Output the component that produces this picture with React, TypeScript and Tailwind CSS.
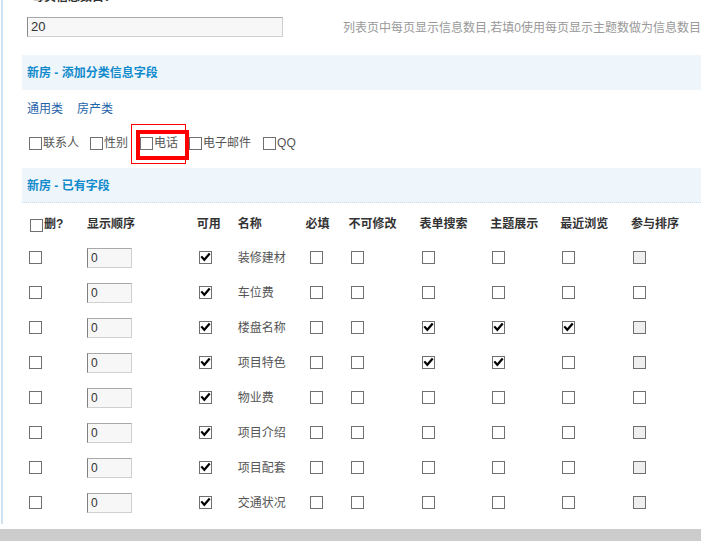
import React from "react";

function Cb({ checked = false, disabled = false, className = "" }: { checked?: boolean; disabled?: boolean; className?: string }) {
  return (
    <span
      className={
        "inline-flex shrink-0 w-[13px] h-[13px] border border-[#707070] items-center justify-center " +
        (disabled ? "bg-[#efefef] border-[#8a8a8a] " : "bg-white ") +
        className
      }
    >
      {checked && (
        <svg width="11" height="11" viewBox="0 0 11 11">
          <path d="M2 5.2 L4.3 7.8 L9 2.3" stroke="#000" strokeWidth="2.2" fill="none" strokeLinecap="square" />
        </svg>
      )}
    </span>
  );
}

type Row = { name: string; search: boolean; show: boolean; recent: boolean; sortDisabled: boolean };

const rows: Row[] = [
  { name: "装修建材", search: false, show: false, recent: false, sortDisabled: true },
  { name: "车位费", search: false, show: false, recent: false, sortDisabled: false },
  { name: "楼盘名称", search: true, show: true, recent: true, sortDisabled: true },
  { name: "项目特色", search: true, show: true, recent: false, sortDisabled: true },
  { name: "物业费", search: false, show: false, recent: false, sortDisabled: false },
  { name: "项目介绍", search: false, show: false, recent: false, sortDisabled: true },
  { name: "项目配套", search: false, show: false, recent: false, sortDisabled: true },
  { name: "交通状况", search: false, show: false, recent: false, sortDisabled: true },
];

function SectionHeader({ title, dotted = false }: { title: string; dotted?: boolean }) {
  return (
    <div
      className={
        "ml-[19px] h-[35px] bg-[#eef5fb] flex items-center pl-[5px] pt-[1px] text-[12px] font-bold text-[#118bcc] " +
        (dotted ? "border-b border-dotted border-[#c8dcef]" : "")
      }
    >
      {title}
    </div>
  );
}

export default function App() {
  return (
    <div className='relative w-[701px] h-[541px] overflow-hidden bg-white font-["Liberation_Sans","Noto_Sans_CJK_SC",sans-serif] text-[12px] text-[#555]'>
      <div className="ml-[1px] border-l-2 border-[#cfe2f2] h-[524px] flex flex-col">
        {/* cut-off title */}
        <div className="h-[17px] flex flex-col">
          <div className="-mt-[9px] ml-[29px] leading-[12px] font-bold text-[#333] whitespace-nowrap">每页信息数目：</div>
        </div>
        {/* input row */}
        <div className="flex items-center h-[20px] ml-[24px]">
          <div className="w-[256px] h-[20px] bg-[#f7f7f7] border border-t-[#a9a9a9] border-l-[#8a8a8a] border-r-[#cfcfcf] border-b-[#cfcfcf] flex items-center pl-[3px] text-[13px] text-[#333]">
            20
          </div>
          <div className="ml-[60px] whitespace-nowrap text-[#999] leading-[14px] pt-[2px]">
            列表页中每页显示信息数目,若填0使用每页显示主题数做为信息数目
          </div>
        </div>
        <div className="h-[18px]" />
        <SectionHeader title="新房 - 添加分类信息字段" />
        {/* links */}
        <div className="h-[36px] flex items-center ml-[24px] pt-[1px] gap-[14px] text-[#1f63a9]">
          <span>通用类</span>
          <span>房产类</span>
        </div>
        {/* checkbox row */}
        <div className="h-[42px] flex items-start pt-[11px] ml-[26px]">
          {[
            ["联系人", "mr-[11px]"],
            ["性别", "mr-[12px]"],
            ["电话", "mr-[11px]"],
            ["电子邮件", "mr-[12px]"],
            ["QQ", ""],
          ].map(([l, m]) => (
            <span key={l} className={"flex items-center h-[13px] " + m}>
              <Cb />
              <span className="ml-[1px] text-[12px] leading-[13px]">{l}</span>
            </span>
          ))}
        </div>
        <SectionHeader title="新房 - 已有字段" dotted />
        {/* table */}
        <div className="ml-[24px] mt-[8px]">
          <div className="flex h-[29px] items-center font-bold text-[#333]">
            <div className="w-[60px] flex items-center">
              <Cb className="ml-[3px]" />
              <span className="ml-[1px] -mt-[3px]">删?</span>
            </div>
            <div className="w-[110px] -mt-[3px]">显示顺序</div>
            <div className="w-[41px] -mt-[3px]">可用</div>
            <div className="w-[68px] -mt-[3px]">名称</div>
            <div className="w-[43px] -mt-[3px]">必填</div>
            <div className="w-[71px] -mt-[3px]">不可修改</div>
            <div className="w-[71px] -mt-[3px]">表单搜索</div>
            <div className="w-[70px] -mt-[3px]">主题展示</div>
            <div className="w-[71px] -mt-[3px]">最近浏览</div>
            <div className="w-[70px] -mt-[3px] whitespace-nowrap">参与排序</div>
          </div>
          {rows.map((r) => (
            <div key={r.name} className="flex h-[35px] items-center">
              <div className="w-[60px] flex">
                <Cb className="ml-[2px]" />
              </div>
              <div className="w-[110px]">
                <div className="w-[45px] h-[20px] bg-[#f7f7f7] border border-t-[#a9a9a9] border-l-[#808080] border-r-[#d0d0d0] border-b-[#d0d0d0] flex items-center pl-[3px] text-[12px] text-[#333]">
                  0
                </div>
              </div>
              <div className="w-[41px] flex">
                <Cb checked className="ml-[2px]" />
              </div>
              <div className="w-[68px] whitespace-nowrap">{r.name}</div>
              <div className="w-[43px] flex">
                <Cb className="ml-[4px]" />
              </div>
              <div className="w-[71px] flex">
                <Cb className="ml-[2px]" />
              </div>
              <div className="w-[71px] flex">
                <Cb checked={r.search} className="ml-[3px]" />
              </div>
              <div className="w-[70px] flex">
                <Cb checked={r.show} className="ml-[2px]" />
              </div>
              <div className="w-[71px] flex">
                <Cb checked={r.recent} className="ml-[2px]" />
              </div>
              <div className="w-[70px] flex">
                <Cb disabled={r.sortDisabled} className="ml-[2px]" />
              </div>
            </div>
          ))}
        </div>
      </div>
      <div className="h-[5px]" />
      <div className="h-[12px] bg-[#cccccc]" />

      {/* red highlight boxes */}
      <div className="absolute left-[131px] top-[124px] w-[55px] h-[40px] border border-[#ff0000]" />
      <div className="absolute left-[136px] top-[130px] w-[53px] h-[30px] border-4 border-[#ff0000]" />
    </div>
  );
}
